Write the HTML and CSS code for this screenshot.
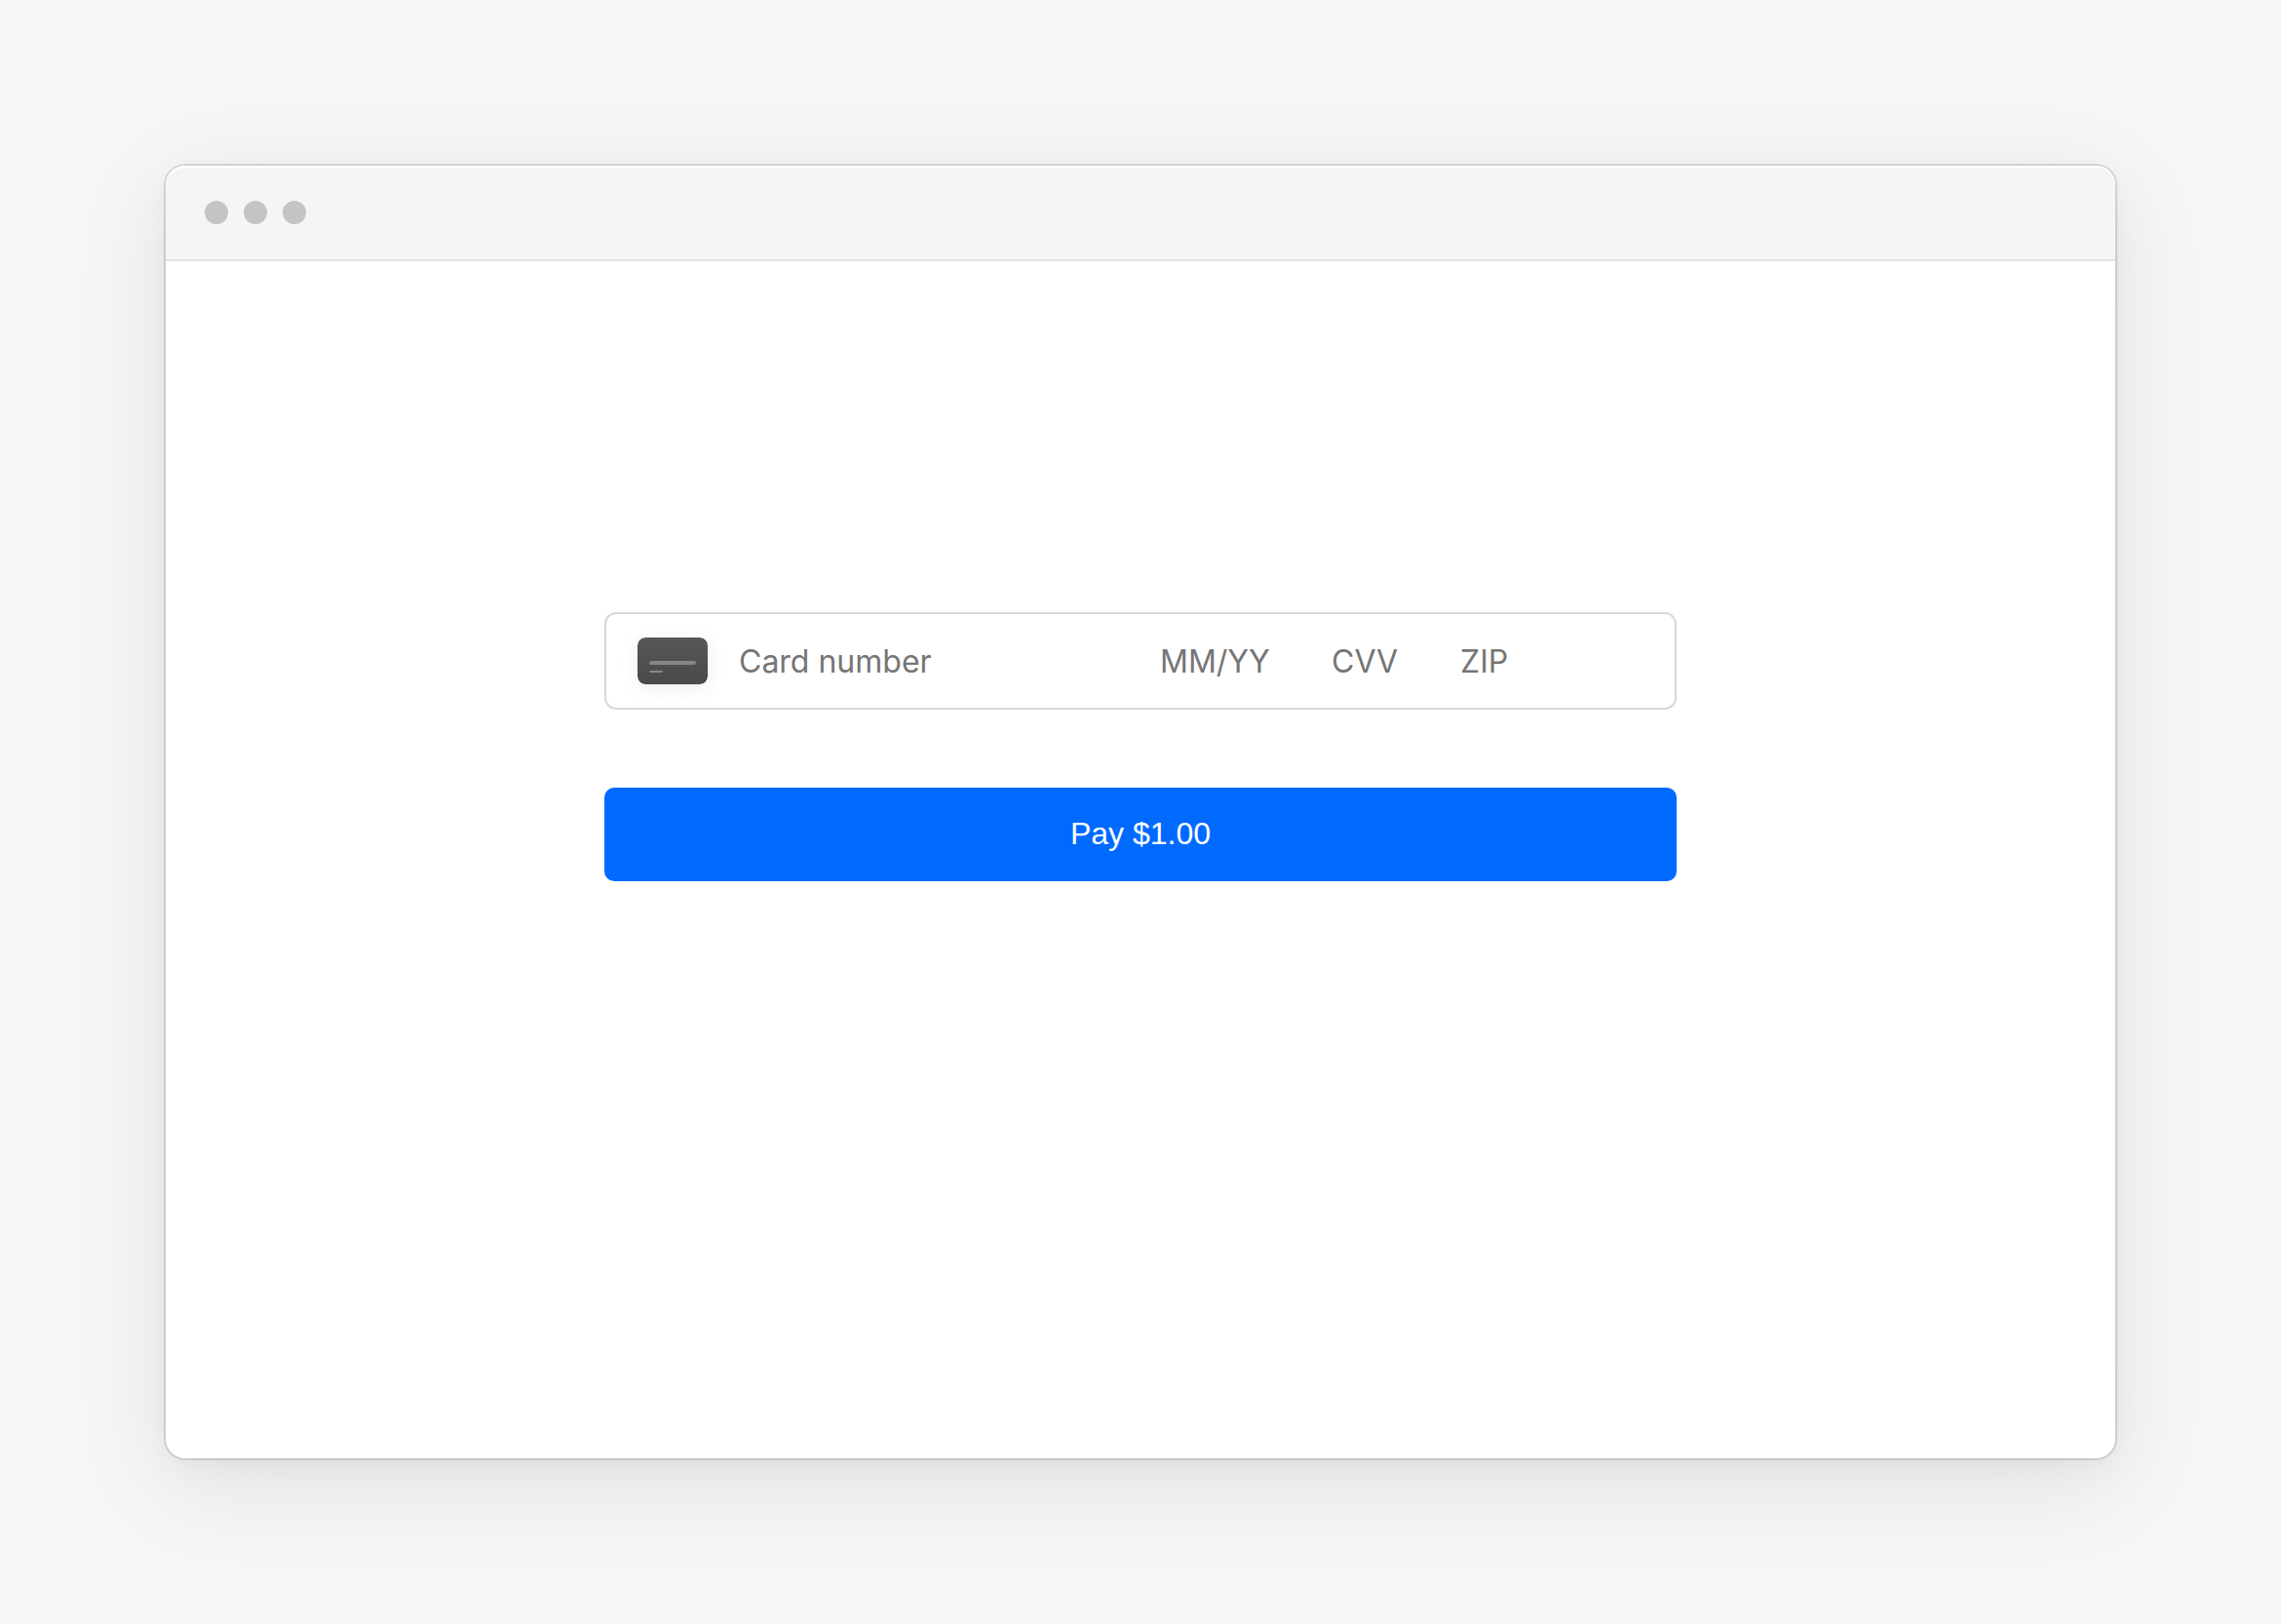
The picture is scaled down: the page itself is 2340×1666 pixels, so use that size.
FILE: index.html
```html
<!DOCTYPE html>
<html lang="en">
<head>
    <meta charset="UTF-8">
    <meta name="viewport" content="width=device-width, initial-scale=1.0">
    <title>Checkout</title>
    <link rel="stylesheet" href="styles.css">
</head>
<body>
    <div class="window">
        <!-- Title bar -->
        <div class="title-bar">
            <span class="dot"></span>
            <span class="dot"></span>
            <span class="dot"></span>
        </div>

        <!-- Payment form -->
        <form class="payment-form">
            <div class="card-field">
                <svg class="card-icon" viewBox="0 0 72 48" aria-hidden="true">
                    <defs>
                        <linearGradient id="card-fill" x1="0" y1="0" x2="0" y2="1">
                            <stop offset="0" stop-color="#57585a"/>
                            <stop offset="1" stop-color="#48494b"/>
                        </linearGradient>
                    </defs>
                    <rect width="72" height="48" rx="8" fill="url(#card-fill)"/>
                    <rect x="12" y="24" width="48" height="4" rx="2" fill="#858688"/>
                    <rect x="12" y="34" width="14" height="2" rx="1" fill="#858688"/>
                </svg>
                <input class="number" type="text" inputmode="numeric" placeholder="Card number" aria-label="Card number">
                <input class="expiry" type="text" inputmode="numeric" placeholder="MM/YY" aria-label="Expiration date">
                <input class="cvv" type="text" inputmode="numeric" placeholder="CVV" aria-label="CVV">
                <input class="zip" type="text" placeholder="ZIP" aria-label="ZIP">
            </div>
            <button class="pay-button" type="button">Pay $1.00</button>
        </form>
    </div>
</body>
</html>
```
FILE: styles.css
```css
/* General Styling */
* {
    box-sizing: border-box;
}

body {
    display: flex;
    min-height: 100vh;
    margin: 0;
    padding: 170px;
    font-family: Inter, sans-serif;
    background-color: #f5f6f8;
}

/* Browser Window */
.window {
    flex: 1;
    border-radius: 20px;
    background-color: white;
    box-shadow: 0 0 0 2px rgba(0, 0, 0, 0.12), 0 8px 24px rgba(0, 0, 0, 0.04), 0 24px 100px rgba(0, 0, 0, 0.09);
}

.title-bar {
    display: flex;
    align-items: center;
    gap: 16px;
    height: 98px;
    padding: 0 40px;
    border-bottom: 2px solid #e3e3e3;
    border-radius: 20px 20px 0 0;
    background-color: #f5f5f5;
    box-shadow: inset 0 2px white;
}

.dot {
    width: 24px;
    height: 24px;
    border-radius: 50%;
    background-color: #c4c4c4;
}

/* Payment Form */
.payment-form {
    display: flex;
    flex-direction: column;
    gap: 80px;
    width: 55%;
    margin: 0 auto;
    padding: 360px 0;
}

.card-field {
    display: flex;
    align-items: center;
    gap: 32px;
    height: 100px;
    padding: 0 32px;
    border: 2px solid #d8d8d8;
    border-radius: 12px;
}

.card-icon {
    flex: none;
    width: 72px;
    height: 48px;
    border-radius: 8px;
    box-shadow: 0 4px 20px rgba(0, 0, 0, 0.07);
}

.card-field input {
    min-width: 0;
    height: 48px;
    padding: 0;
    border: none;
    outline: none;
    font-family: inherit;
    font-size: 32px;
    color: #333;
    background: none;
}

.card-field input::placeholder {
    color: #757575;
}

.card-field .number {
    flex: 1;
}

.card-field .expiry {
    width: 144px;
}

.card-field .cvv {
    width: 100px;
}

.card-field .zip {
    width: 188px;
}

.pay-button {
    height: 96px;
    padding: 0 0 2px;
    border: none;
    border-radius: 10px;
    font-family: "Liberation Sans", Arial, sans-serif;
    font-size: 32px;
    color: white;
    background-color: #006aff;
    cursor: pointer;
}

.pay-button:hover {
    background-color: #005fe5;
}
```
